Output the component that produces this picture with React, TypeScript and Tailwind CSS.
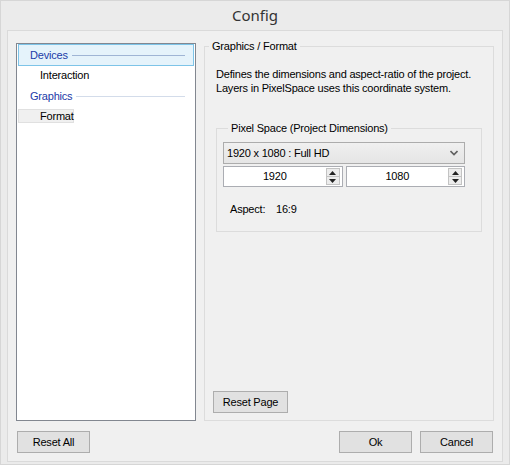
const Button = ({ label, className = "" }: { label: string; className?: string }) => (
  <button
    className={`h-[22px] w-[73px] border border-[#adadad] bg-[#e1e1e1] text-[11px] leading-none tracking-[-0.2px] text-black ${className}`}
  >
    {label}
  </button>
);

const Spinner = ({ value }: { value: string }) => (
  <div className="flex h-[21px] items-center border border-[#abadb3] bg-white">
    <div className="flex-1 text-center text-[11px] leading-none text-black">{value}</div>
    <div className="mr-[2px] flex h-[17px] w-[14px] flex-col border border-[#c3c3c3]">
      <div className="flex flex-1 items-center justify-center border-b border-[#c3c3c3] bg-[#ececec]">
        <svg width="7" height="4" viewBox="0 0 7 4">
          <polygon points="0,4 7,4 3.5,0" fill="#222" />
        </svg>
      </div>
      <div className="flex flex-1 items-center justify-center bg-[#ececec]">
        <svg width="7" height="4" viewBox="0 0 7 4">
          <polygon points="0,0 7,0 3.5,4" fill="#222" />
        </svg>
      </div>
    </div>
  </div>
);

export default function App() {
  return (
    <div
      className="flex h-[465px] w-[510px] flex-col border border-[#d6d6d6] bg-[#ebebeb] px-[6px] pb-[2px]"
      style={{ fontFamily: '"Liberation Sans", Arial, sans-serif' }}
    >
      <div
        className="flex h-[29px] items-center justify-center text-[15px] text-[#333]"
        style={{ fontFamily: '"Noto Sans", "Open Sans", sans-serif' }}
      >
        Config
      </div>

      <div className="flex flex-1 flex-col border border-[#dadada] bg-[#f0f0f0] px-[8px] pb-[8px]">
        <div className="flex h-[390px] gap-[8px]">
          {/* tree list */}
          <div className="mt-[12px] h-[378px] w-[180px] border border-[#828790] bg-white px-[1px] text-[11px] tracking-[-0.2px] text-black">
            <div className="flex h-[22px] items-center border border-[#7dc4e8] bg-[#e5f3fb] pl-[11px] pr-[8px]">
              <span className="text-[#1c3ba8]">Devices</span>
              <div className="ml-[4px] h-px flex-1 bg-[#9fb5d5]" />
            </div>
            <div className="flex h-[18px] items-center pl-[22px]">Interaction</div>
            <div className="flex h-[24px] items-center pl-[12px] pr-[9px]">
              <span className="text-[#1c3ba8]">Graphics</span>
              <div className="ml-[4px] h-px flex-1 bg-[#d3dcea]" />
            </div>
            <div className="mt-[1px] flex h-[14px] w-[56px] items-center border border-[#e0e0e0] bg-[#f0f0f0] pl-[21px]">
              Format
            </div>
          </div>

          {/* page group */}
          <fieldset className="mt-[8px] flex h-[382px] w-[290px] flex-col border border-[#dcdcdc] px-[11px] pb-[7px] text-[11px] tracking-[-0.2px] text-black">
            <legend className="-ml-[7px] px-[3px] leading-[14px]">Graphics / Format</legend>
            <p className="mt-[14px] leading-[14px]">
              Defines the dimensions and aspect-ratio of the project.
              <br />
              Layers in PixelSpace uses this coordinate system.
            </p>

            <fieldset className="mt-[26px] h-[111px] border border-[#dcdcdc] pl-[6px] pr-[16px]">
              <legend className="ml-[5px] px-[3px] leading-[14px]">Pixel Space (Project Dimensions)</legend>
              <div className="mt-[7px] flex h-[22px] items-center justify-between border border-[#acacac] bg-[#e8e8e8] bg-gradient-to-b from-[#f0f0f0] to-[#e5e5e5] pl-[3px] pr-[6px]">
                <span>1920 x 1080 : Full HD</span>
                <svg width="8" height="6" viewBox="0 0 8 6">
                  <polyline points="0.5,1 4,4.5 7.5,1" fill="none" stroke="#606060" strokeWidth="1.6" />
                </svg>
              </div>
              <div className="mt-[2px] grid grid-cols-2 gap-[3px]">
                <Spinner value="1920" />
                <Spinner value="1080" />
              </div>
              <div className="mt-[14px] flex pl-[7px]">
                <span className="w-[46px]">Aspect:</span>
                <span>16:9</span>
              </div>
            </fieldset>

            <div className="flex-1" />
            <Button label="Reset Page" className="-ml-[3px] w-[75px]" />
          </fieldset>
        </div>

        <div className="mt-[10px] flex gap-[8px] px-[1px]">
          <Button label="Reset All" />
          <div className="flex-1" />
          <Button label="Ok" />
          <Button label="Cancel" />
        </div>
      </div>
    </div>
  );
}
